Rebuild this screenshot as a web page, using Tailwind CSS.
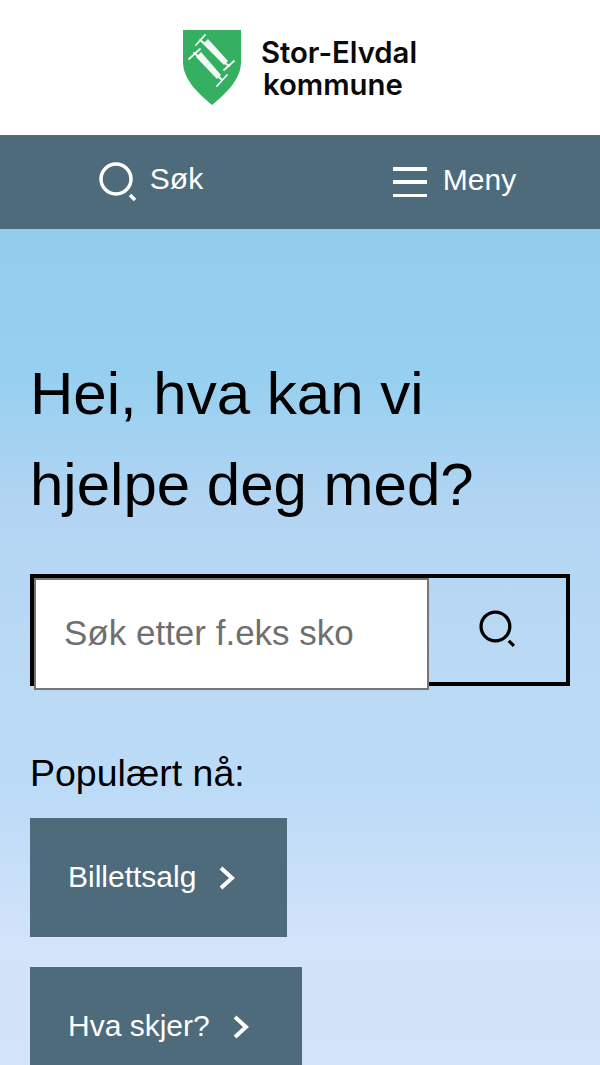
<!DOCTYPE html>
<html lang="no">
<head>
    <meta charset="UTF-8">
    <meta name="viewport" content="width=device-width, initial-scale=1.0">
    <title>Stor-Elvdal kommune</title>
    <script src="https://cdn.jsdelivr.net/npm/@tailwindcss/browser@4"></script>
</head>
<body class="h-[1065px] overflow-hidden bg-white font-['Liberation_Sans',Arial,sans-serif] text-black">
    <!-- Logo -->
    <header class="flex h-[135px] items-start justify-center bg-white pt-[30px]">
        <svg class="mr-[20px] h-[75px] w-[58px]" viewBox="0 0 58 75">
            <path d="M0 0H58V32C58 50 42 64 29 75C16 64 0 50 0 32Z" fill="#35b062"/>
            <g fill="#f4f8f4">
                <path d="M20 14L25 9L45 31L41 35Z"/>
                <path d="M13 27L18 22L38 45L34 49Z"/>
            </g>
            <g fill="none" stroke="#f4f8f4" stroke-linecap="round">
                <path d="M17 10L22 14M42 33L46 36M11 23L15 26M35 46L39 50" stroke-width="2"/>
                <path d="M13 15L22 5M41 40L51 31M6 29L17 19M34 56L44 45" stroke-width="1.8"/>
            </g>
        </svg>
        <div class="flex flex-col pt-[7px] font-['Inter',sans-serif] text-[29.3px] leading-[32px] font-semibold text-[#0a0a0a]">
            <span>Stor-Elvdal</span>
            <span class="pl-[2px]">kommune</span>
        </div>
    </header>

    <!-- Nav -->
    <nav class="flex h-[94px] items-center bg-[#4e6b7c] text-[30px] text-white">
        <a class="flex w-[300px] items-center justify-center gap-[11px] pl-[2px]">
            <svg class="h-[40px] w-[40px]" viewBox="0 0 40 40" fill="none" stroke="#fff">
                <circle cx="17" cy="17" r="15" stroke-width="3.5"/>
                <path d="M31 33L36 38" stroke-width="3.5"/>
            </svg>
            <span class="pb-[8px]">Søk</span>
        </a>
        <a class="flex w-[300px] items-center justify-center gap-[16px] pl-[9px]">
            <span class="flex h-[30px] w-[34px] flex-col justify-between">
                <span class="h-[3.5px] bg-white"></span>
                <span class="h-[3.5px] bg-white"></span>
                <span class="h-[3.5px] bg-white"></span>
            </span>
            <span class="pb-[6px]">Meny</span>
        </a>
    </nav>

    <!-- Hero -->
    <main class="h-[836px] overflow-hidden bg-[linear-gradient(180deg,#93ccec_0%,#96cfef_17%,#b3d5f3_34%,#b9d9f5_50%,#bcdbf7_68%,#d2e3fa_85%,#d3e3f9_100%)] px-[30px] pt-[119px]">
        <h1 class="text-[60px] leading-[91px] font-normal">Hei, hva kan vi<br>hjelpe deg med?</h1>

        <form class="mt-[44px] flex h-[112px] w-[540px] border-4 border-black">
            <input class="h-[112px] w-[395px] shrink-0 rounded-none border-2 border-[#767676] bg-white pb-[2px] pl-[28px] text-[35px] outline-none placeholder:text-[#6f6f6f]" placeholder="Søk etter f.eks sko">
            <button type="button" class="flex flex-1 items-start justify-center pt-[32px] pl-[2px]">
                <svg class="h-[39px] w-[39px]" viewBox="0 0 38 38" fill="none" stroke="#000">
                    <circle cx="16" cy="16" r="14" stroke-width="3.2"/>
                    <path d="M29 30L34 35" stroke-width="3.2"/>
                </svg>
            </button>
        </form>

        <p class="mt-[62px] text-[37.5px] leading-[50px]">Populært nå:</p>

        <div class="mt-[20px] flex flex-col items-start gap-[30px] text-[30px] text-white">
            <a class="flex h-[119px] w-[257px] items-center gap-[23px] bg-[#4e6b7c] pl-[38px]">
                <span class="pb-[3px]">Billettsalg</span>
                <svg class="h-[24px] w-[16px]" viewBox="0 0 16 24" fill="none" stroke="#fff" stroke-width="4"><path d="M2 2L13 12L2 22"/></svg>
            </a>
            <a class="flex h-[119px] w-[272px] items-center gap-[23px] bg-[#4e6b7c] pl-[38px]">
                <span class="pb-[3px]">Hva skjer?</span>
                <svg class="h-[24px] w-[16px]" viewBox="0 0 16 24" fill="none" stroke="#fff" stroke-width="4"><path d="M2 2L13 12L2 22"/></svg>
            </a>
        </div>
    </main>
</body>
</html>
